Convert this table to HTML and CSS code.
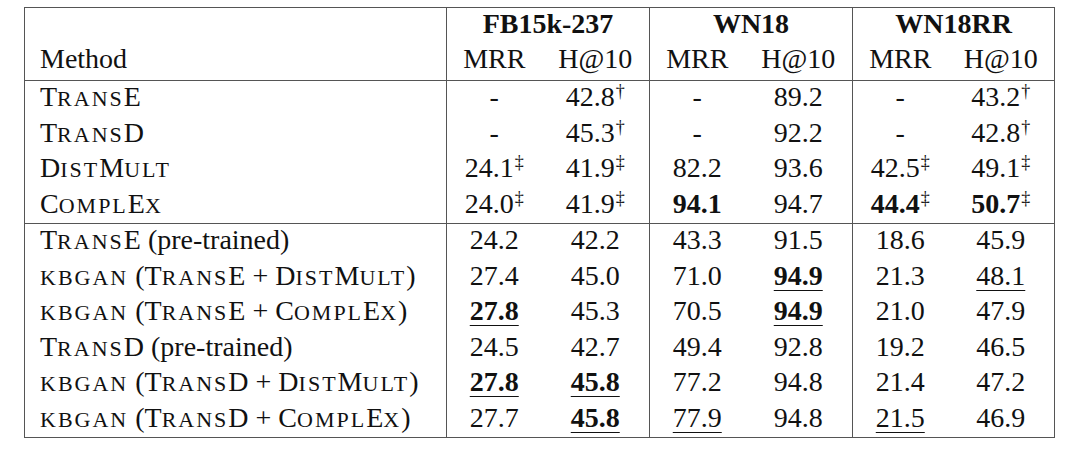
FILE: index.html
```html
<!DOCTYPE html>
<html lang="en">
<head>
  <meta charset="UTF-8">
  <title>KBGAN results</title>
  <link rel="stylesheet" href="styles.css">
</head>
<body>
  <table class="results">
    <colgroup>
      <col class="col-method">
      <col class="col-mrr"><col class="col-hit">
      <col class="col-mrr"><col class="col-hit">
      <col class="col-mrr"><col class="col-hit-last">
    </colgroup>
    <thead>
      <tr class="group-row">
        <th class="method-head"></th>
        <th colspan="2" class="end">FB15k-237</th>
        <th colspan="2" class="end">WN18</th>
        <th colspan="2">WN18RR</th>
      </tr>
      <tr class="metric-row">
        <th class="method-head">Method</th>
        <th>MRR</th><th class="end">H@10</th>
        <th>MRR</th><th class="end">H@10</th>
        <th>MRR</th><th>H@10</th>
      </tr>
    </thead>
    <tbody class="baselines">
      <tr>
        <td class="method">T<span class="sc">rans</span>E</td>
        <td>-</td><td class="end">42.8<sup>&dagger;</sup></td>
        <td>-</td><td class="end">89.2</td>
        <td>-</td><td>43.2<sup>&dagger;</sup></td>
      </tr>
      <tr>
        <td class="method">T<span class="sc">rans</span>D</td>
        <td>-</td><td class="end">45.3<sup>&dagger;</sup></td>
        <td>-</td><td class="end">92.2</td>
        <td>-</td><td>42.8<sup>&dagger;</sup></td>
      </tr>
      <tr>
        <td class="method">D<span class="sc">ist</span>M<span class="sc">ult</span></td>
        <td>24.1<sup>&Dagger;</sup></td><td class="end">41.9<sup>&Dagger;</sup></td>
        <td>82.2</td><td class="end">93.6</td>
        <td>42.5<sup>&Dagger;</sup></td><td>49.1<sup>&Dagger;</sup></td>
      </tr>
      <tr>
        <td class="method">C<span class="sc">ompl</span>E<span class="sc">x</span></td>
        <td>24.0<sup>&Dagger;</sup></td><td class="end">41.9<sup>&Dagger;</sup></td>
        <td><b>94.1</b></td><td class="end">94.7</td>
        <td><b>44.4</b><sup>&Dagger;</sup></td><td><b>50.7</b><sup>&Dagger;</sup></td>
      </tr>
    </tbody>
    <tbody class="ours">
      <tr>
        <td class="method">T<span class="sc">rans</span>E (pre-trained)</td>
        <td>24.2</td><td class="end">42.2</td>
        <td>43.3</td><td class="end">91.5</td>
        <td>18.6</td><td>45.9</td>
      </tr>
      <tr>
        <td class="method"><span class="sc">kbgan</span> (T<span class="sc">rans</span>E + D<span class="sc">ist</span>M<span class="sc">ult</span>)</td>
        <td>27.4</td><td class="end">45.0</td>
        <td>71.0</td><td class="end"><b class="u">94.9</b></td>
        <td>21.3</td><td><span class="u">48.1</span></td>
      </tr>
      <tr>
        <td class="method"><span class="sc">kbgan</span> (T<span class="sc">rans</span>E + C<span class="sc">ompl</span>E<span class="sc">x</span>)</td>
        <td><b class="u">27.8</b></td><td class="end">45.3</td>
        <td>70.5</td><td class="end"><b class="u">94.9</b></td>
        <td>21.0</td><td>47.9</td>
      </tr>
      <tr>
        <td class="method">T<span class="sc">rans</span>D (pre-trained)</td>
        <td>24.5</td><td class="end">42.7</td>
        <td>49.4</td><td class="end">92.8</td>
        <td>19.2</td><td>46.5</td>
      </tr>
      <tr>
        <td class="method"><span class="sc">kbgan</span> (T<span class="sc">rans</span>D + D<span class="sc">ist</span>M<span class="sc">ult</span>)</td>
        <td><b class="u">27.8</b></td><td class="end"><b class="u">45.8</b></td>
        <td>77.2</td><td class="end">94.8</td>
        <td>21.4</td><td>47.2</td>
      </tr>
      <tr>
        <td class="method"><span class="sc">kbgan</span> (T<span class="sc">rans</span>D + C<span class="sc">ompl</span>E<span class="sc">x</span>)</td>
        <td>27.7</td><td class="end"><b class="u">45.8</b></td>
        <td><span class="u">77.9</span></td><td class="end">94.8</td>
        <td><span class="u">21.5</span></td><td>46.9</td>
      </tr>
    </tbody>
  </table>
</body>
</html>
```

FILE: styles.css
```css
body {
  margin: 0;
  padding: 7px 0 0 24px;
  background: #fff;
  color: #111;
  font-family: "Liberation Serif", "Times New Roman", serif;
  font-size: 28px;
}

.results {
  width: 1030px;
  table-layout: fixed;
  border-collapse: collapse;
  border: 1px solid #555;
}

.col-method { width: 422px; }
.col-mrr { width: 95px; }
.col-hit { width: 108px; }
.col-hit-last { width: 107px; }

.results th,
.results td {
  padding: 0 0 4px 0;
  text-align: center;
  white-space: nowrap;
  line-height: 31.5px;
}

.results th {
  font-weight: normal;
}

.group-row th {
  font-weight: bold;
  line-height: 31px;
}

.metric-row th {
  line-height: 31px;
  padding-bottom: 6px;
}

.results .method-head,
.results .method {
  text-align: left;
  padding-left: 15px;
  border-right: 1px solid #555;
}

.results .end {
  border-right: 1px solid #555;
}

thead,
.baselines {
  border-bottom: 1px solid #555;
}

/* small caps drawn by hand, LaTeX style: shorter caps, loose tracking */
.sc {
  font-size: 22px;
  line-height: 0;
  text-transform: uppercase;
  letter-spacing: 2px;
}

sup {
  font-size: 18px;
  line-height: 0;
  vertical-align: 9px;
  margin-left: 1px;
}

.u {
  text-decoration: underline;
  text-decoration-thickness: 1px;
  text-underline-offset: 5px;
}
```
